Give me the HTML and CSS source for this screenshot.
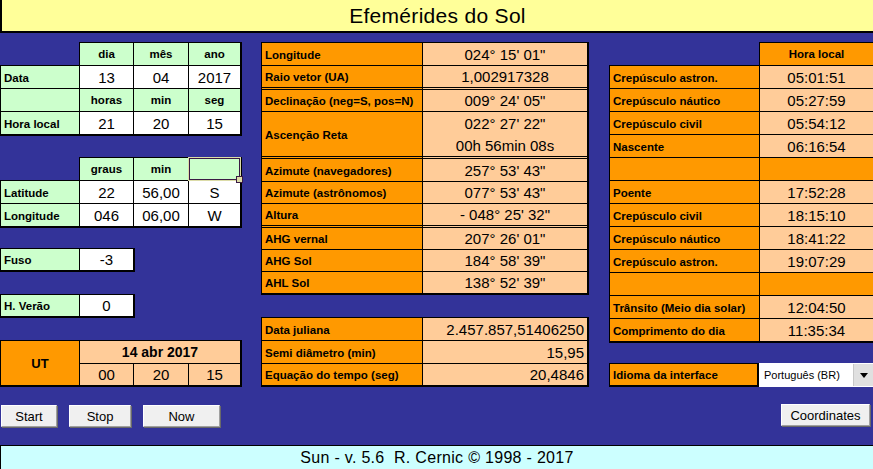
FILE: index.html
```html
<!DOCTYPE html>
<html lang="pt-BR">
<head>
<meta charset="utf-8">
<title>Efemérides do Sol</title>
<link rel="stylesheet" href="styles.css">
</head>
<body>
<header class="banner">Efemérides do Sol</header>
<main class="main">
  <section class="col left">
    <div class="tbl t4 date">
      <div class="blank"></div>
      <div class="hd green">dia</div><div class="hd green">mês</div><div class="hd green">ano</div>
      <div class="lbl green">Data</div>
      <div class="num white">13</div><div class="num white">04</div><div class="num white">2017</div>
      <div class="lbl green"></div>
      <div class="hd green">horas</div><div class="hd green">min</div><div class="hd green">seg</div>
      <div class="lbl green">Hora local</div>
      <div class="num white">21</div><div class="num white">20</div><div class="num white">15</div>
    </div>
    <div class="tbl t4 coords">
      <div class="blank"></div>
      <div class="hd green">graus</div><div class="hd green">min</div><div class="hd green sel"></div>
      <div class="lbl green">Latitude</div>
      <div class="num white">22</div><div class="num white">56,00</div><div class="num white">S</div>
      <div class="lbl green">Longitude</div>
      <div class="num white">046</div><div class="num white">06,00</div><div class="num white">W</div>
    </div>
    <div class="tbl t2 fuso">
      <div class="lbl green">Fuso</div><div class="num white">-3</div>
    </div>
    <div class="tbl t2 verao">
      <div class="lbl green">H. Verão</div><div class="num white">0</div>
    </div>
    <div class="tbl t4 ut">
      <div class="ut-lbl orange">UT</div>
      <div class="ut-date peach">14 abr 2017</div>
      <div class="num peach">00</div><div class="num peach">20</div><div class="num peach">15</div>
    </div>
    <div class="btns">
      <button class="btn b-start">Start</button>
      <button class="btn b-stop">Stop</button>
      <button class="btn b-now">Now</button>
    </div>
  </section>

  <section class="col mid">
    <div class="tbl t-mid">
      <div class="lbl orange">Longitude</div><div class="num peach">024° 15' 01"</div>
      <div class="lbl orange">Raio vetor (UA)</div><div class="num peach">1,002917328</div>
      <div class="orange"></div><div class="peach"></div>
      <div class="lbl orange">Declinação (neg=S, pos=N)</div><div class="num peach">009° 24' 05"</div>
      <div class="lbl orange">Ascenção Reta</div>
      <div class="num peach two"><span>022° 27' 22"</span><span>00h 56min 08s</span></div>
      <div class="orange"></div><div class="peach"></div>
      <div class="lbl orange">Azimute (navegadores)</div><div class="num peach">257° 53' 43"</div>
      <div class="lbl orange">Azimute (astrônomos)</div><div class="num peach">077° 53' 43"</div>
      <div class="lbl orange">Altura</div><div class="num peach">- 048° 25' 32"</div>
      <div class="orange"></div><div class="peach"></div>
      <div class="lbl orange">AHG vernal</div><div class="num peach">207° 26' 01"</div>
      <div class="lbl orange">AHG Sol</div><div class="num peach">184° 58' 39"</div>
      <div class="lbl orange">AHL Sol</div><div class="num peach">138° 52' 39"</div>
    </div>
    <div class="tbl t-mid2">
      <div class="lbl orange">Data juliana</div><div class="num peach rt">2.457.857,51406250</div>
      <div class="lbl orange">Semi diâmetro (min)</div><div class="num peach rt">15,95</div>
      <div class="lbl orange">Equação do tempo (seg)</div><div class="num peach rt">20,4846</div>
    </div>
  </section>

  <section class="col right">
    <div class="tbl t-right">
      <div class="blank"></div><div class="hd orange">Hora local</div>
      <div class="lbl orange">Crepúsculo astron.</div><div class="num peach">05:01:51</div>
      <div class="lbl orange">Crepúsculo náutico</div><div class="num peach">05:27:59</div>
      <div class="lbl orange">Crepúsculo civil</div><div class="num peach">05:54:12</div>
      <div class="lbl orange">Nascente</div><div class="num peach">06:16:54</div>
      <div class="orange"></div><div class="orange"></div>
      <div class="lbl orange">Poente</div><div class="num peach">17:52:28</div>
      <div class="lbl orange">Crepúsculo civil</div><div class="num peach">18:15:10</div>
      <div class="lbl orange">Crepúsculo náutico</div><div class="num peach">18:41:22</div>
      <div class="lbl orange">Crepúsculo astron.</div><div class="num peach">19:07:29</div>
      <div class="orange"></div><div class="orange"></div>
      <div class="lbl orange">Trânsito (Meio dia solar)</div><div class="num peach">12:04:50</div>
      <div class="lbl orange">Comprimento do dia</div><div class="num peach">11:35:34</div>
    </div>
    <div class="lang">
      <div class="lang-lbl">Idioma da interface</div>
      <div class="select">
        <span class="select-text">Português (BR)</span>
        <span class="drop"><svg width="8" height="5" viewBox="0 0 8 5"><path d="M0 0H8L4 5Z" fill="#000"/></svg></span>
      </div>
    </div>
    <button class="btn b-coord">Coordinates</button>
  </section>
</main>
<footer class="footer">Sun - v. 5.6&nbsp;&nbsp;R. Cernic © 1998 - 2017</footer>
</body>
</html>
```

FILE: styles.css
```css
* { box-sizing: border-box; }
html, body { margin: 0; padding: 0; }
body {
  width: 873px;
  height: 469px;
  overflow: hidden;
  background: #333399;
  font-family: "Liberation Sans", Arial, sans-serif;
  color: #000;
  display: flex;
  flex-direction: column;
}

.banner {
  height: 33px;
  flex: none;
  background: #FFFF99;
  border-left: 2px solid #000;
  border-bottom: 2px solid #000;
  display: flex;
  align-items: center;
  justify-content: center;
  font-size: 21px;
  letter-spacing: 0.3px;
  padding-top: 1px;
}

.main {
  flex: 1;
  display: grid;
  grid-template-columns: 261px 348px 1fr;
  padding-top: 9px;
}

.footer {
  height: 24px;
  flex: none;
  background: #CCFFFF;
  border-top: 1px solid #000;
  border-left: 1px solid #000;
  display: flex;
  align-items: center;
  justify-content: center;
  font-size: 16px;
  letter-spacing: 0.3px;
}

.col {
  display: flex;
  flex-direction: column;
  align-items: flex-start;
}

/* generic table grid */
.tbl {
  display: grid;
  gap: 1px;
  background: #000;
  padding: 1px 2px 2px 1px;
}
.tbl > div {
  display: flex;
  align-items: center;
  justify-content: center;
}
.tbl > .lbl {
  justify-content: flex-start;
  padding-left: 3px;
  font-weight: bold;
  font-size: 11.5px;
  padding-top: 1px;
}
.tbl > .blank {
  background: #333399;
  margin: -1px 0 0 -1px;
}
.hd { font-weight: bold; font-size: 11.5px; }
.num { font-size: 15px; }
.tbl > .rt { justify-content: flex-end; padding-right: 3px; }

.green { background: #CCFFCC; }
.orange { background: #FF9900; }
.peach { background: #FFCC99; }
.white { background: #FFFFFF; }

/* left tables */
.t4 { grid-template-columns: 78px 53px 54px 51px; grid-auto-rows: 22px; }
.t2 { grid-template-columns: 78px 53px; grid-auto-rows: 21px; }
.coords { margin-top: 21px; }
.fuso { margin-top: 20px; }
.verao { margin-top: 22px; }
.ut { margin-top: 22px; grid-template-rows: 22px 21px; }
.tbl > .ut-lbl {
  grid-row: span 2;
  font-weight: bold;
  font-size: 13px;
}
.tbl > .ut-date {
  grid-column: span 3;
  font-weight: bold;
  font-size: 14px;
}

.sel {
  position: relative;
  box-shadow: inset 0 0 0 1px #3a1a44, 0 0 0 1px #dcdca8;
}
.sel::after {
  content: "";
  position: absolute;
  right: -3px;
  bottom: -3px;
  width: 5px;
  height: 5px;
  background: #dcdca8;
  border: 1px solid #3a1a44;
}

/* buttons */
.btn {
  height: 22px;
  padding: 0;
  background: #F0F0F0;
  border: 1px solid;
  border-color: #FFFFFF #A0A0A0 #A0A0A0 #FFFFFF;
  box-shadow: 1px 1px 0 #696969;
  font-family: "Liberation Sans", Arial, sans-serif;
  font-size: 13px;
  color: #000;
  display: flex;
  align-items: center;
  justify-content: center;
}
.btns {
  display: flex;
  gap: 12px;
  margin-top: 18px;
  margin-left: 1px;
}
.b-start { width: 56px; }
.b-stop { width: 62px; }
.b-now { width: 77px; }

/* middle */
.t-mid {
  grid-template-columns: 160px 164px;
  grid-template-rows: 22px 21px 1px 21px 44px 1px 22px 21px 21px 1px 21px 21px 21px;
}
.tbl > .two {
  flex-direction: column;
}
.two span {
  height: 22px;
  display: flex;
  align-items: center;
}
.t-mid2 {
  margin-top: 22px;
  grid-template-columns: 160px 164px;
  grid-template-rows: 22px 22px 21px;
}

/* right */
.right { align-items: stretch; }
.t-right {
  grid-template-columns: 149px 1fr;
  grid-auto-rows: 22px;
  padding-right: 0;
}
.lang {
  margin-top: 20px;
  display: flex;
  height: 24px;
}
.lang-lbl {
  width: 150px;
  background: #FF9900;
  border: 1px solid #000;
  border-bottom-width: 2px;
  border-right-width: 2px;
  font-weight: bold;
  font-size: 11.5px;
  display: flex;
  align-items: center;
  padding-left: 3px;
  padding-top: 1px;
}
.select {
  flex: 1;
  background: #FFFFFF;
  display: flex;
  align-items: center;
  justify-content: space-between;
}
.select-text {
  font-size: 11px;
  padding-left: 5px;
}
.drop {
  width: 20px;
  height: 22px;
  background: #E0E0E0;
  border-left: 1px solid #C8C8C8;
  display: flex;
  align-items: center;
  justify-content: center;
}
.b-coord {
  align-self: flex-start;
  margin-top: 17px;
  margin-left: 172px;
  width: 89px;
}
```
